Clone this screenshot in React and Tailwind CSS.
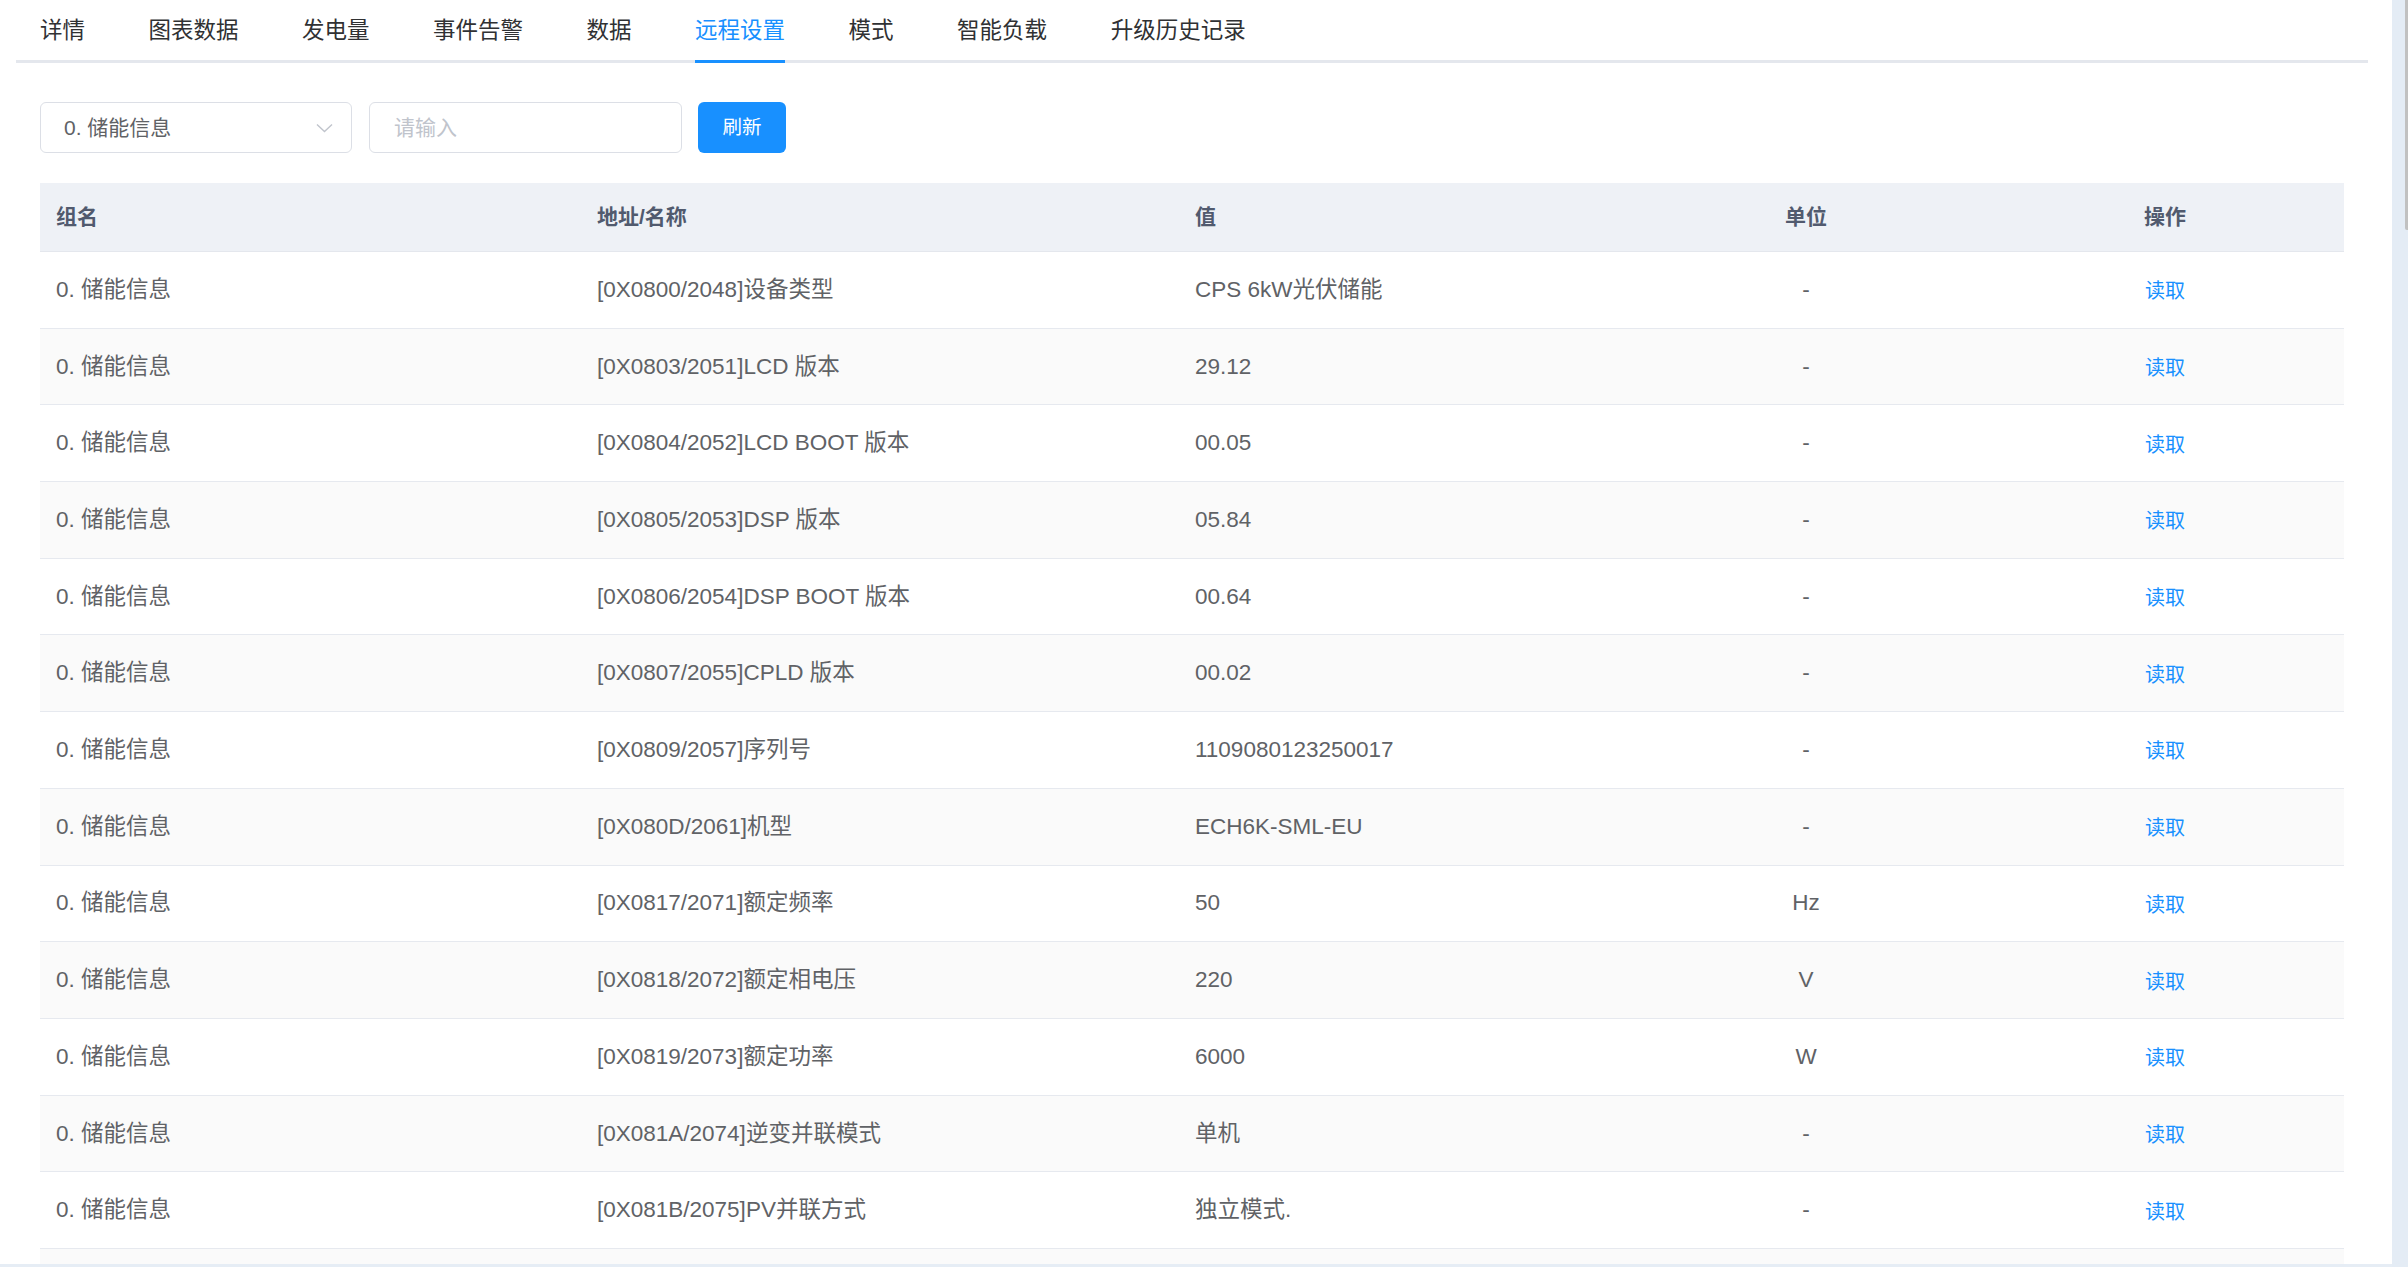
import React from "react";

const FONT = { fontFamily: '"Liberation Sans", "Noto Sans CJK SC", sans-serif' };

const tabs = ["详情", "图表数据", "发电量", "事件告警", "数据", "远程设置", "模式", "智能负载", "升级历史记录"];

const rows = [
  ["[0X0800/2048]设备类型", "CPS 6kW光伏储能", "-"],
  ["[0X0803/2051]LCD 版本", "29.12", "-"],
  ["[0X0804/2052]LCD BOOT 版本", "00.05", "-"],
  ["[0X0805/2053]DSP 版本", "05.84", "-"],
  ["[0X0806/2054]DSP BOOT 版本", "00.64", "-"],
  ["[0X0807/2055]CPLD 版本", "00.02", "-"],
  ["[0X0809/2057]序列号", "1109080123250017", "-"],
  ["[0X080D/2061]机型", "ECH6K-SML-EU", "-"],
  ["[0X0817/2071]额定频率", "50", "Hz"],
  ["[0X0818/2072]额定相电压", "220", "V"],
  ["[0X0819/2073]额定功率", "6000", "W"],
  ["[0X081A/2074]逆变并联模式", "单机", "-"],
  ["[0X081B/2075]PV并联方式", "独立模式.", "-"],
];

const cols = "grid grid-cols-[541px_598px_447px_360px_358px]";

export default function App() {
  return (
    <div className="flex w-[2408px] h-[1267px] overflow-hidden bg-[#e6edf5]" style={FONT}>
      <div className="w-[2392px] h-[1264px] bg-white overflow-hidden flex flex-col">
        {/* Tabs */}
        <div className="ml-[16px] w-[2352px] h-[63px] shrink-0 shadow-[inset_0_-3px_0_#e4e7ed] flex pl-[24px] gap-[63.5px]">
          {tabs.map((t) => {
            const active = t === "远程设置";
            return (
              <div
                key={t}
                className={
                  "h-[63px] pt-[2px] border-b-[3px] flex items-center text-[22.5px] leading-none whitespace-nowrap " +
                  (active ? "border-[#1890ff] text-[#1890ff]" : "border-transparent text-[#303133]")
                }
              >
                {t}
              </div>
            );
          })}
        </div>

        {/* Controls */}
        <div className="mt-[39px] pl-[40px] flex items-center shrink-0">
          <div className="w-[312px] h-[51px] border border-[#dcdfe6] rounded-[6px] flex items-center justify-between pl-[23px] pr-[18px]">
            <span className="text-[21px] text-[#606266]">0. 储能信息</span>
            <svg width="17" height="10" viewBox="0 0 17 10" fill="none">
              <path d="M1 1.5 L8.5 8.5 L16 1.5" stroke="#c0c4cc" strokeWidth="1.4" />
            </svg>
          </div>
          <div className="ml-[17px] w-[313px] h-[51px] border border-[#dcdfe6] rounded-[6px] flex items-center pl-[24px]">
            <span className="text-[21px] text-[#c0c4cc]">请输入</span>
          </div>
          <div className="ml-[16px] w-[88px] h-[51px] bg-[#1890ff] rounded-[6px] flex items-center justify-center text-white text-[19.5px]">
            刷新
          </div>
        </div>

        {/* Table */}
        <div className="mt-[30px] ml-[40px] w-[2304px] shrink-0">
          <div className={cols + " h-[69px] bg-[#eef1f6] border-b border-[#e4e7ed] text-[21px] font-bold text-[#515a6e]"}>
            <div className="flex items-center pl-[16px]">组名</div>
            <div className="flex items-center pl-[16px]">地址/名称</div>
            <div className="flex items-center pl-[16px]">值</div>
            <div className="flex items-center justify-center">单位</div>
            <div className="flex items-center justify-center">操作</div>
          </div>
          {rows.map((r, i) => (
            <div
              key={i}
              className={
                cols +
                " h-[76.7px] border-b border-[#e6e9ef] text-[22.5px] text-[#606266] " +
                (i % 2 === 1 ? "bg-[#fafafa]" : "bg-white")
              }
            >
              <div className="flex items-center pl-[16px] whitespace-nowrap">0. 储能信息</div>
              <div className="flex items-center pl-[16px] whitespace-nowrap">{r[0]}</div>
              <div className="flex items-center pl-[16px] whitespace-nowrap">{r[1]}</div>
              <div className="flex items-center justify-center">{r[2]}</div>
              <div className="flex items-center justify-center pt-[3px] text-[20px] text-[#1890ff]">读取</div>
            </div>
          ))}
          <div className="h-[76.7px] bg-[#fafafa]" />
        </div>
      </div>

      {/* Scrollbar */}
      <div className="w-[16px] h-[1267px] bg-[#e4ecf5] flex justify-end">
        <div className="w-[3px] h-[230px] bg-[#c1c1c1] rounded-bl-[2px]" />
      </div>
    </div>
  );
}
